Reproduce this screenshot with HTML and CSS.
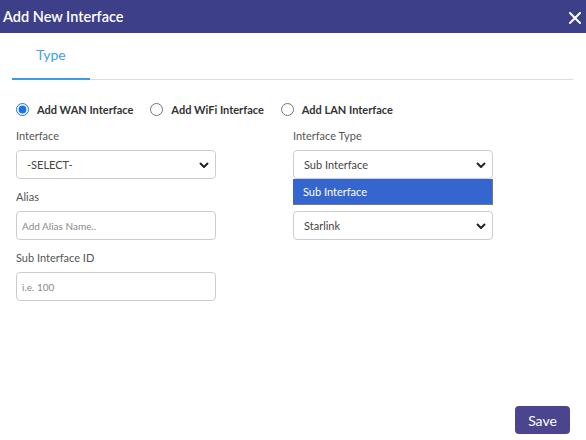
FILE: index.html
```
<!DOCTYPE html>
<html lang="en">
<head>
    <meta charset="UTF-8">
    <meta name="viewport" content="width=device-width, initial-scale=1.0">
    <title>Add New Interface</title>
    <link rel="stylesheet" href="styles.css">
</head>
<body>
    <div class="modal">
        <div class="modal-header">
            <h1>Add New Interface</h1>
            <button class="close-btn" aria-label="Close">
                <svg width="12" height="12" viewBox="0 0 12 12">
                    <path d="M1 1 L11 11 M11 1 L1 11" stroke="#fff" stroke-width="2" stroke-linecap="square"/>
                </svg>
            </button>
        </div>

        <div class="tabs">
            <div class="tab active">Type</div>
        </div>

        <div class="modal-body">
            <div class="radio-row">
                <label class="radio"><input type="radio" name="kind" checked> Add WAN Interface</label>
                <label class="radio"><input type="radio" name="kind"> Add WiFi Interface</label>
                <label class="radio"><input type="radio" name="kind"> Add LAN Interface</label>
            </div>

            <div class="form-grid">
                <div class="field">
                    <label>Interface</label>
                    <div class="select">
                        <span>-SELECT-</span>
                        <svg class="chevron" width="10" height="6" viewBox="0 0 10 6"><path d="M1 1 L5 5 L9 1" fill="none" stroke="#222" stroke-width="2"/></svg>
                    </div>
                </div>
                <div class="field">
                    <label>Interface Type</label>
                    <div class="select open">
                        <span>Sub Interface</span>
                        <svg class="chevron" width="10" height="6" viewBox="0 0 10 6"><path d="M1 1 L5 5 L9 1" fill="none" stroke="#222" stroke-width="2"/></svg>
                        <ul class="dropdown">
                            <li class="selected">Sub Interface</li>
                        </ul>
                    </div>
                </div>

                <div class="field">
                    <label>Alias</label>
                    <input type="text" placeholder="Add Alias Name..">
                </div>
                <div class="field">
                    <label>&nbsp;</label>
                    <div class="select">
                        <span>Starlink</span>
                        <svg class="chevron" width="10" height="6" viewBox="0 0 10 6"><path d="M1 1 L5 5 L9 1" fill="none" stroke="#222" stroke-width="2"/></svg>
                    </div>
                </div>

                <div class="field">
                    <label>Sub Interface ID</label>
                    <input type="text" placeholder="i.e. 100">
                </div>
            </div>
        </div>

        <div class="modal-footer">
            <button class="save-btn">Save</button>
        </div>
    </div>
</body>
</html>
```

FILE: styles.css
```
* {
    box-sizing: border-box;
}
body {
    margin: 0;
    font-family: Lato, "Noto Sans", sans-serif;
    color: #333;
    background: #fff;
}
.modal {
    display: flex;
    flex-direction: column;
    height: 100vh;
}
.modal-header {
    height: 33px;
    background: #3d3f88;
    display: flex;
    align-items: center;
    justify-content: space-between;
    padding: 0 5px 0 3px;
}
.modal-header h1 {
    margin: 0;
    color: #fff;
    font-size: 14.5px;
    font-weight: 600;
}
.close-btn {
    background: none;
    border: none;
    padding: 0;
    width: 12px;
    height: 12px;
    cursor: pointer;
    margin-top: 2px;
}
.tabs {
    margin: 0 13px 0 12px;
    height: 47px;
    border-bottom: 1px solid #ddd;
    display: flex;
    align-items: flex-end;
}
.tab {
    width: 78px;
    text-align: center;
    font-size: 14px;
    color: #42a0e6;
    padding-bottom: 15px;
    margin-bottom: -1px;
}
.tab.active {
    border-bottom: 2px solid #3b9de6;
}
.modal-body {
    padding: 0 16px;
}
.radio-row {
    margin-top: 21px;
    height: 16px;
    display: flex;
    align-items: center;
}
.radio {
    display: flex;
    align-items: center;
    gap: 8px;
    font-size: 11px;
    font-weight: 700;
    color: #333;
    margin-right: 17px;
}
.radio input {
    margin: 0;
    width: 13px;
    height: 13px;
    accent-color: #1a73e8;
}
.form-grid {
    margin-top: 11px;
    display: grid;
    grid-template-columns: 200px 200px;
    column-gap: 77px;
    row-gap: 10px;
}
.field label {
    display: block;
    font-size: 11px;
    line-height: 16px;
    color: #555;
    margin-bottom: 6px;
}
.select,
.field input {
    position: relative;
    width: 200px;
    height: 29px;
    border: 1px solid #ccc;
    border-radius: 4px;
    background: #fff;
    font-family: inherit;
    font-size: 11px;
    color: #444;
}
.select {
    display: flex;
    align-items: center;
    justify-content: space-between;
    padding: 0 6px 0 10px;
}
.field input {
    padding: 0 5px;
    font-size: 10px;
    outline: none;
}
.field input::placeholder {
    color: #8a8a8a;
}
.dropdown {
    position: absolute;
    left: -1px;
    top: 28px;
    width: 200px;
    margin: 0;
    padding: 0;
    list-style: none;
    z-index: 2;
}
.dropdown li {
    height: 26px;
    line-height: 25px;
    padding-left: 10px;
    font-size: 11px;
}
.dropdown li.selected {
    background: #3566d0;
    color: #fff;
    border-right: 1px solid #777;
    border-bottom: 1px solid #777;
}
.modal-footer {
    margin-top: auto;
    display: flex;
    justify-content: flex-end;
    padding: 0 16px 6px 0;
}
.save-btn {
    width: 55px;
    height: 28px;
    background: #4b4590;
    color: #fff;
    border: none;
    border-radius: 4px;
    font-family: inherit;
    font-size: 14px;
    cursor: pointer;
}
```
